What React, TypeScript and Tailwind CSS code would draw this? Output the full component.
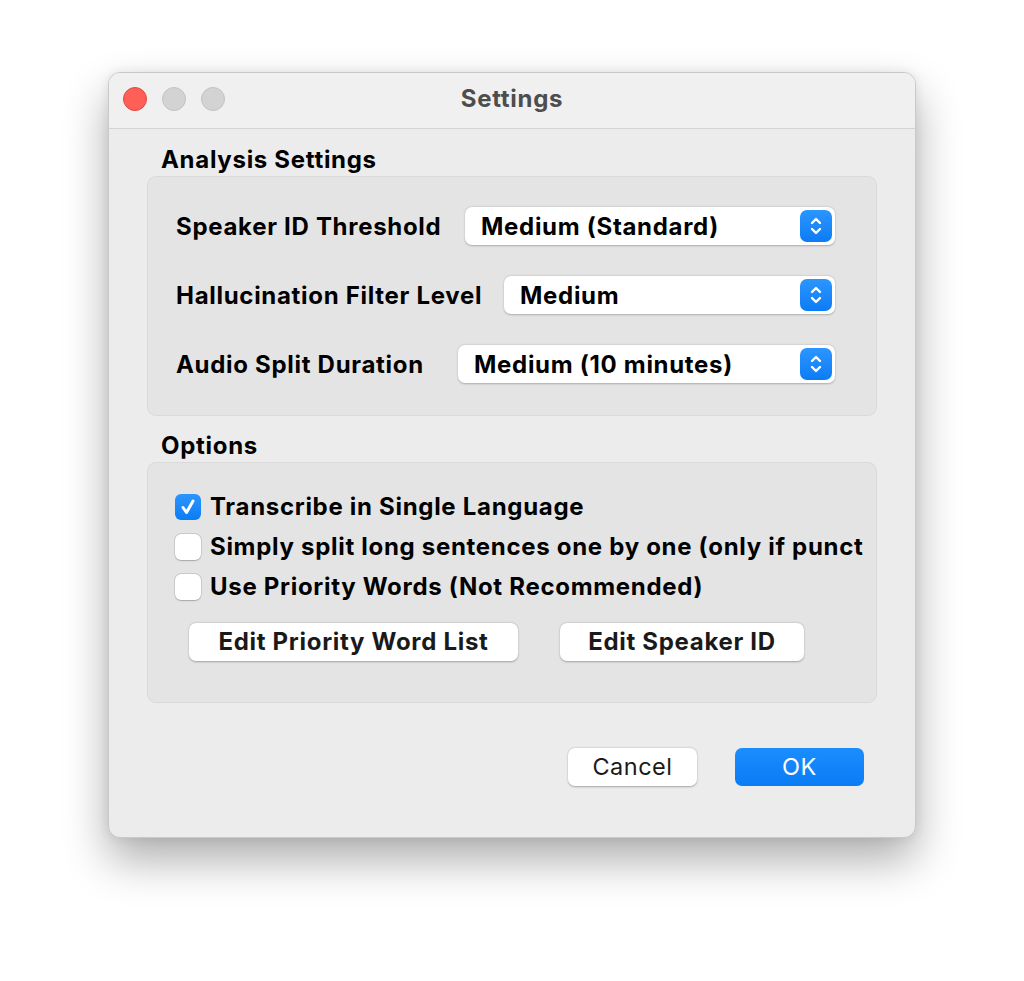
import React from "react";

const font = { fontFamily: '"Inter", "Liberation Sans", sans-serif' };

function Stepper() {
  return (
    <div className="w-[32px] h-[32px] rounded-[7px] bg-gradient-to-b from-[#2b95ff] to-[#0a7cf5] flex items-center justify-center">
      <svg width="14" height="22" viewBox="0 0 14 22" fill="none" stroke="white" strokeWidth="2.4" strokeLinecap="round" strokeLinejoin="round">
        <path d="M3 8 L7 4 L11 8" />
        <path d="M3 14 L7 18 L11 14" />
      </svg>
    </div>
  );
}

function Popup({ value, w }: { value: string; w: string }) {
  return (
    <div className={`${w} h-[38px] bg-white rounded-[7px] shadow-[0_0.5px_2px_rgba(0,0,0,0.25)] flex items-center justify-between pl-[16px] pr-[3px]`}>
      <span className="text-[24px] font-bold text-black tracking-[0.7px] pt-[2px]">{value}</span>
      <Stepper />
    </div>
  );
}

function Row({ label, value, w }: { label: string; value: string; w: string }) {
  return (
    <div className="flex items-center justify-between h-[38px]">
      <span className="text-[24px] font-bold text-black whitespace-nowrap tracking-[0.7px] pt-[2px]">{label}</span>
      <Popup value={value} w={w} />
    </div>
  );
}

function Checkbox({ checked, label }: { checked?: boolean; label: string }) {
  return (
    <div className="flex items-center h-[40px] gap-[9px] whitespace-nowrap">
      {checked ? (
        <div className="w-[26px] h-[26px] rounded-[6px] bg-gradient-to-b from-[#2b95ff] to-[#0a7cf5] flex items-center justify-center shrink-0">
          <svg width="20" height="20" viewBox="0 0 20 20" fill="none" stroke="white" strokeWidth="3" strokeLinecap="round" strokeLinejoin="round">
            <path d="M5 10.5 L8.5 15.5 L15 4" />
          </svg>
        </div>
      ) : (
        <div className="w-[26px] h-[26px] rounded-[6px] bg-white shadow-[0_0_0_0.5px_rgba(0,0,0,0.15),0_0.5px_1.5px_rgba(0,0,0,0.2)] shrink-0" />
      )}
      <span className="text-[24px] font-bold text-black tracking-[0.7px]">{label}</span>
    </div>
  );
}

function Btn({ label, w, bold }: { label: string; w: string; bold?: boolean }) {
  return (
    <div className={`${w} h-[38px] bg-white rounded-[7px] shadow-[0_0.5px_2px_rgba(0,0,0,0.3)] flex items-center justify-center ${bold ? "text-[24px] font-bold tracking-[0.7px]" : "text-[23.5px] font-normal tracking-[0.5px]"} text-[#1a1a1a]`}>
      {label}
    </div>
  );
}

export default function App() {
  return (
    <div className="w-[1024px] h-[981px] bg-white pt-[72px] pl-[108px]" style={font}>
      <div className="w-[808px] h-[766px] rounded-[12px] bg-[#ececec] border border-[#c9c9c9] shadow-[0_22px_45px_rgba(0,0,0,0.32),0_0_12px_rgba(0,0,0,0.08)] overflow-hidden flex flex-col">
        <div className="h-[56px] shrink-0 bg-[#f0f0f1] border-b border-[#d4d4d4] flex items-center relative pb-[3px]">
          <div className="absolute left-[14px] top-[14px] flex gap-[15px]">
            <div className="w-[24px] h-[24px] rounded-full bg-[#fe5f57] border border-[#e2463f]" />
            <div className="w-[24px] h-[24px] rounded-full bg-[#d3d3d3] border border-[#c2c2c2]" />
            <div className="w-[24px] h-[24px] rounded-full bg-[#d3d3d3] border border-[#c2c2c2]" />
          </div>
          <div className="w-full text-center text-[24px] font-bold text-[#4d4d4d] tracking-[0.7px]">Settings</div>
        </div>
        <div className="px-[38px] pt-[17px] flex flex-col">
          <div className="pl-[14px] h-[28px] leading-[28px] text-[24px] font-bold text-black tracking-[0.7px]">Analysis Settings</div>
          <div className="mt-[2px] h-[240px] rounded-[9px] bg-[#e4e4e4] border border-[#dadada] pl-[28px] pr-[41px] pt-[30px] flex flex-col gap-[31px]">
            <Row label="Speaker ID Threshold" value="Medium (Standard)" w="w-[370px]" />
            <Row label="Hallucination Filter Level" value="Medium" w="w-[331px]" />
            <Row label="Audio Split Duration" value="Medium (10 minutes)" w="w-[377px]" />
          </div>
          <div className="mt-[16px] pl-[14px] h-[28px] leading-[28px] text-[24px] font-bold text-black tracking-[0.7px]">Options</div>
          <div className="mt-[2px] h-[241px] rounded-[9px] bg-[#e4e4e4] border border-[#dadada] pl-[27px] pr-[10px] pt-[24px] flex flex-col">
            <Checkbox checked label="Transcribe in Single Language" />
            <Checkbox label="Simply split long sentences one by one (only if punct" />
            <Checkbox label="Use Priority Words (Not Recommended)" />
            <div className="mt-[16px] pl-[14px] flex gap-[42px]">
              <Btn label="Edit Priority Word List" w="w-[329px]" bold />
              <Btn label="Edit Speaker ID" w="w-[244px]" bold />
            </div>
          </div>
          <div className="mt-[45px] flex justify-end gap-[38px] pr-[13px]">
            <Btn label="Cancel" w="w-[129px]" />
            <div className="w-[129px] h-[38px] rounded-[7px] bg-gradient-to-b from-[#1a8dff] to-[#0a7cf5] flex items-center justify-center text-[23.5px] tracking-[0.5px] text-white">OK</div>
          </div>
        </div>
      </div>
    </div>
  );
}
